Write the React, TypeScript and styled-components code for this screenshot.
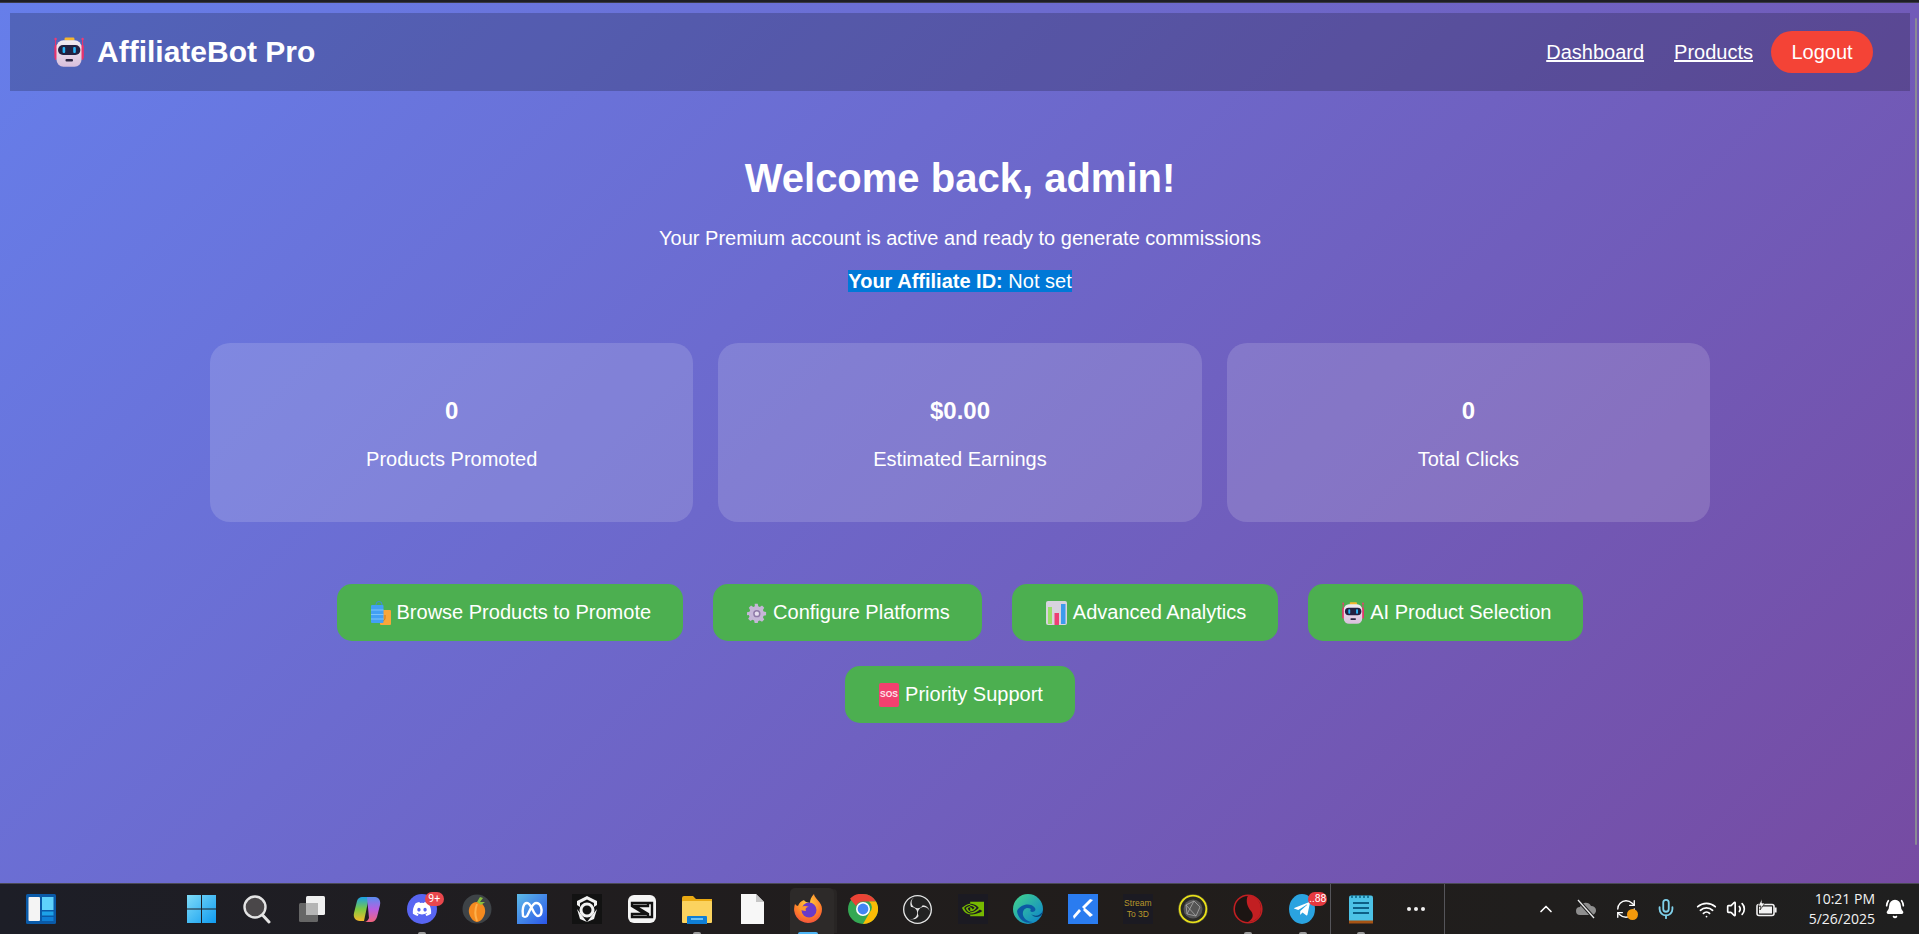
import React from "react";
import styled, { createGlobalStyle } from "styled-components";
import { ChevronUp, Mic, Wifi, Volume2, BellRing, RefreshCw } from "lucide-react";
import { FaDiscord, FaTelegramPlane } from "react-icons/fa";
import { SiObsstudio, SiNvidia } from "react-icons/si";

const Global = createGlobalStyle`
  html, body { margin: 0; padding: 0; height: 100%; overflow: hidden; }
  body { font-family: "Liberation Sans", Arial, sans-serif; color: #fff; }
  #root { height: 100%; }
`;

const Screen = styled.div`
  height: 934px; display: flex; flex-direction: column; position: relative; overflow: hidden;
`;
const TopEdge = styled.div`
  height: 3px; flex: none; background: #1e1e24; border-bottom: 1px solid #3a3a48; box-sizing: border-box;
`;
const Page = styled.main`
  flex: 1; min-height: 0; padding: 10px 9px 0 10px;
  background: linear-gradient(135deg, #667eea 0%, #764ba2 100%);
  box-sizing: border-box; position: relative;
`;
const ScrollThumb = styled.div`
  position: absolute; right: 2px; top: 15px; width: 2px; height: 827px; background: #8a8a94; border-radius: 1px;
`;
const Header = styled.header`
  height: 78px; padding: 0 37px 0 44px; box-sizing: border-box; display: flex; align-items: center;
  justify-content: space-between; background: rgba(0, 0, 0, 0.2);
`;
const Brand = styled.div`
  display: flex; align-items: center; gap: 13px; font-size: 30px; font-weight: 700;
`;
const Nav = styled.nav`
  display: flex; align-items: center;
`;
const NavLink = styled.a`
  color: #fff; font-size: 20px; text-decoration: underline; margin-right: ${(p: { $gap: number }) => p.$gap}px;
`;
const Logout = styled.button`
  width: 102px; height: 42px; border: 0; border-radius: 21px; background: #f44336; color: #fff;
  font: 20px "Liberation Sans", Arial, sans-serif; padding: 0;
`;
const Content = styled.div`
  width: 1500px; margin: 0 auto; text-align: center;
`;
const Title = styled.h1`
  font-size: 40px; line-height: 46px; font-weight: 700; margin: 64px 0 0;
`;
const Sub = styled.p`
  font-size: 20px; line-height: 23px; margin: 26px 0 0; color: #fff;
`;
const IdLine = styled.p`
  font-size: 20px; line-height: 22px; margin: 20px 0 0;
`;
const Selected = styled.span`
  background: #0078d7; color: #fff; display: inline-block; height: 22px;
`;
const Stats = styled.section`
  display: grid; grid-template-columns: repeat(3, 1fr); gap: 25px; margin-top: 51px;
`;
const Stat = styled.div`
  height: 179px; border-radius: 20px; background: rgba(255, 255, 255, 0.15);
  display: flex; flex-direction: column; align-items: center; padding-top: 56px; box-sizing: border-box;
`;
const StatValue = styled.div`
  font-size: 24px; line-height: 24px; font-weight: 700;
`;
const StatLabel = styled.div`
  font-size: 20px; line-height: 24px; margin-top: 24px;
`;
const Actions = styled.section`
  display: flex; flex-wrap: wrap; justify-content: center; gap: 25px 30px; margin-top: 62px; padding: 0 100px;
`;
const Action = styled.button`
  height: 57px; padding: 0 32px 0 34px; border: 0; border-radius: 15px; background: #4caf50; color: #fff;
  font: 20px "Liberation Sans", Arial, sans-serif; display: inline-flex; align-items: center; gap: 6px;
`;
const Taskbar = styled.footer`
  height: 51px; flex: none; box-sizing: border-box; border-top: 1px solid #4a4a55;
  background: linear-gradient(90deg, #1d1e27 0%, #201d1f 30%, #211d1b 60%, #1f1f1f 100%);
  display: flex; align-items: center; position: relative;
`;
const Widgets = styled.div`
  width: 30px; height: 30px; margin-left: 26px; margin-right: 118.5px; display: flex;
`;
const Slot = styled.div<{ $active?: boolean }>`
  width: 55.05px; height: 50px; flex: none; display: flex; align-items: center; justify-content: center; position: relative;
  ${(p) => p.$active && `
    &::before { content: ""; position: absolute; left: 10px; top: 4px; bottom: 0; width: 44px;
      border-radius: 5px 5px 0 0; background: #2d2a29; box-shadow: 4px 0 0 -1px #282524; }
  `}
  & > svg, & > span { position: relative; }
`;
const Running = styled.i<{ $blue?: boolean }>`
  position: absolute; bottom: 0; left: 50%; transform: translateX(-50%); height: 2px;
  width: ${(p) => (p.$blue ? 20 : 8)}px; background: ${(p) => (p.$blue ? "#4db5f5" : "#9a9a9a")}; border-radius: 2px 2px 0 0;
`;
const Badge = styled.b<{ $wide?: boolean }>`
  position: absolute; top: 8px; right: ${(p) => (p.$wide ? 3 : 6)}px; min-width: 17px; height: 14px; padding: 0 1px;
  border-radius: 7px; background: ${(p) => (p.$wide ? "#e6393f" : "#e8474d")}; color: #fff;
  font: 400 10.5px/14px "Roboto", sans-serif; text-align: center;
`;
const Divider = styled.div`
  width: 1px; height: 50px; background: #55555a; flex: none;
`;
const Tray = styled.div`
  display: flex; align-items: center; position: absolute; left: 1531px; top: 0; height: 50px;
`;
const TrayItem = styled.div<{ $w: number }>`
  width: ${(p) => p.$w}px; display: flex; justify-content: center; align-items: center; color: #fff;
`;
const Clock = styled.div`
  width: 82px; margin-left: 10px; text-align: right; font: 14px/20px "Open Sans", sans-serif; color: #f2f2f2;
`;
const Round = styled.span<{ $bg: string }>`
  width: 30px; height: 30px; border-radius: 50%; background: ${(p) => p.$bg}; display: flex; align-items: center; justify-content: center;
`;
const StreamTile = styled.span`
  width: 30px; height: 30px; background: #1b1a22; color: #b8982a; font: 8.5px/11px "Liberation Sans", sans-serif;
  display: flex; align-items: center; justify-content: center; text-align: center;
`;

const Robot = ({ size = 30 }: { size?: number }) => (
  <svg width={size} height={size} viewBox="0 0 30 30" style={{ flex: "none" }}>
    <defs><linearGradient id="rb" x1="0" y1="0" x2="0" y2="1"><stop offset="0" stopColor="#f1ecf2" /><stop offset="1" stopColor="#d9bfdc" /></linearGradient></defs>
    <rect x="10.5" y="0.5" width="10" height="3.2" rx="1.4" fill="#f5b52e" />
    <path d="M1.6 2v21M28.6 2v21" stroke="#e8336d" strokeWidth="1.1" />
    <circle cx="1.6" cy="2" r="1.2" fill="#f03a73" /><circle cx="28.6" cy="2" r="1.2" fill="#f03a73" />
    <rect x="0.4" y="8" width="3" height="14" rx="1.4" fill="#e8336d" /><rect x="26.8" y="8" width="3" height="14" rx="1.4" fill="#e8336d" />
    <rect x="2.5" y="3.2" width="25" height="26.5" rx="7" fill="url(#rb)" />
    <rect x="4" y="8" width="22.4" height="10" rx="5" fill="#222040" />
    <rect x="8.6" y="10" width="2.6" height="6" rx="1" fill="#29b6f6" /><rect x="19.2" y="10" width="2.6" height="6" rx="1" fill="#29b6f6" />
    <rect x="11.5" y="22" width="7.5" height="2.4" rx="1" fill="#2b2540" />
  </svg>
);
const Bags = () => (
  <svg width="20" height="24" viewBox="0 0 20 24" style={{ flex: "none" }}>
    <rect x="9" y="9" width="11" height="15" rx="1" fill="#f9a63a" />
    <path d="M14 14v3c0 2-1.5 3-3 3" stroke="#c9761c" fill="none" strokeWidth="1" />
    <path d="M5 4.5v-1a3 3 0 0 1 6 0v1" stroke="#3a8fe0" fill="none" strokeWidth="1" />
    <rect x="0" y="4" width="12.5" height="18" rx="1" fill="#42a0f5" />
    <path d="M0 9h12.5M0 13.5h12.5M0 18h12.5" stroke="#7cc4fa" strokeWidth="1.2" />
  </svg>
);
const Gear = () => (
  <svg width="20" height="24" viewBox="0 0 24 24" style={{ flex: "none" }}>
    <path fill="#c6b6d8" d="M10 1h4l.7 3.2 2 .9L19.6 3.4l2.9 2.9-1.7 2.9.9 2 3.2.7v4l-3.2.7-.9 2 1.7 2.9-2.9 2.9-2.9-1.7-2 .9L14 26h-4l-.7-3.2-2-.9-2.9 1.7-2.9-2.9 1.7-2.9-.9-2L0 16v-4l3.2-.7.9-2L2.4 6.3l2.9-2.9 2.9 1.7 2-.9z" transform="scale(.92)" />
    <circle cx="11.8" cy="12.8" r="4.4" fill="#8f7aa8" /><circle cx="11.8" cy="12.8" r="2.6" fill="#e6deee" />
  </svg>
);
const Chart = () => (
  <svg width="21" height="24" viewBox="0 0 21 24" style={{ flex: "none" }}>
    <rect width="21" height="24" rx="2" fill="#d8d3de" />
    <rect x="2" y="6" width="4" height="17" fill="#9bdf6a" />
    <rect x="8.5" y="12" width="4.5" height="12" fill="#ee3f74" />
    <rect x="15" y="3" width="4.5" height="20" fill="#3d9bec" />
  </svg>
);
const Sos = () => (
  <span style={{ width: 20, height: 24, flex: "none", background: "#f2416f", borderRadius: 2, fontSize: 8.5, fontWeight: 700, lineHeight: "22px", textAlign: "center", color: "#ffe5ec" }}>SOS</span>
);

const I = (p: { children: React.ReactNode; vb?: string }) => (
  <svg width="30" height="30" viewBox={p.vb ?? "0 0 30 30"}>{p.children}</svg>
);

const taskIcons: { key: string; node: React.ReactNode; run?: boolean; blue?: boolean; active?: boolean; badge?: string; wide?: boolean }[] = [
  { key: "start", node: <I><defs><linearGradient id="st" x1="0" y1="0" x2="1" y2="1"><stop offset="0" stopColor="#7fdcf8" /><stop offset="1" stopColor="#0f9bf0" /></linearGradient></defs><path fill="url(#st)" d="M0 1h14v13.5H0zM15 1h14v13.5H15zM0 15.5h14V29H0zM15 15.5h14V29H15z" /></I> },
  { key: "search", node: <I><circle cx="13" cy="13" r="10.5" fill="#4a4749" stroke="#e4e4e4" strokeWidth="2.4" /><path d="M20.5 21l6.5 7" stroke="#e4e4e4" strokeWidth="3" strokeLinecap="round" /></I> },
  { key: "view", node: <I><rect x="9" y="2" width="19" height="19" rx="1.5" fill="#f0f0f0" /><rect x="2" y="9" width="19" height="19" rx="1.5" fill="#6a6a6a" opacity=".95" /><rect x="9" y="9" width="12" height="12" fill="#b5b5b5" /></I> },
  { key: "copilot", node: <I><defs><linearGradient id="cpa" x1="0" y1="0" x2="0" y2="1"><stop offset="0" stopColor="#1aa0e8" /><stop offset=".5" stopColor="#7ac943" /><stop offset="1" stopColor="#f6b92a" /></linearGradient><linearGradient id="cpb" x1="0" y1="0" x2="0" y2="1"><stop offset="0" stopColor="#5a8df0" /><stop offset=".5" stopColor="#b85fe0" /><stop offset="1" stopColor="#f2647c" /></linearGradient></defs><path fill="url(#cpa)" d="M10 3h7l-5 24H8c-5 0-7-4-6-8l3-12c1-3 3-4 5-4z" /><path fill="url(#cpb)" d="M15 3h8c4 0 6 4 5 8l-3 12c-1 3-3 5-6 5h-7c3 0 4-2 5-4z" /></I> },
  { key: "discord", node: <Round $bg="#5865f2"><FaDiscord size={20} color="#fff" /></Round>, run: true, badge: "9+" },
  { key: "fl", node: <I><circle cx="15" cy="15" r="14.5" fill="#3e4347" /><path d="M15 8c6 0 9 6 8 11s-5 9-8 9-7-4-8-9 2-11 8-11z" fill="#f58a1f" /><path d="M15 10c-2 5-2 12 0 17" stroke="#ffb04a" strokeWidth="2" fill="none" /><path d="M15 8l3-5 3 1-3 4 5 0-4 3z" fill="#8bbf3f" /></I> },
  { key: "meta", node: <I><defs><linearGradient id="mt" x1="0" y1="0" x2="1" y2="1"><stop offset="0" stopColor="#5dbbe8" /><stop offset="1" stopColor="#2a55e8" /></linearGradient></defs><rect width="30" height="30" fill="url(#mt)" /><path d="M6 22c-1-6 0-13 4-13 5 0 6 13 11 13 4 0 4-6 3-9-1-3-3-4-5-4-4 0-6 8-9 13-1 1-3 1-4 0z" fill="none" stroke="#fff" strokeWidth="2.4" /></I> },
  { key: "bit", node: <I><rect width="30" height="30" fill="#121212" /><path d="M15 2l10 5v4l-3 2v-4l-7-3.5L8 9v4l-3-2V7z" fill="#f2f2f2" /><circle cx="15" cy="16" r="6" fill="none" stroke="#f2f2f2" strokeWidth="3" /><path d="M5 15l10 13 10-13-3 10-7 3-7-3z" fill="#f2f2f2" /></I> },
  { key: "capcut", node: <I><rect x="1" y="1" width="28" height="28" rx="6" fill="#f5f5f5" /><path d="M5 9h16v3H8l13 8v3H5v-3h13L5 12z M21 9l4 0v14h-4" fill="none" stroke="#111" strokeWidth="2.4" /></I> },
  { key: "explorer", node: <I><path d="M0 4a2 2 0 0 1 2-2h9l3 3h16v5H0z" fill="#e9a913" /><rect y="7" width="30" height="22" rx="1" fill="#fbd35f" /><rect x="5" y="22" width="20" height="9" rx="1" fill="#0f7fd6" /><rect x="9" y="24" width="12" height="2" fill="#6fc3f5" /></I>, run: true },
  { key: "file", node: <I><path d="M4 0h15l8 8v22H4z" fill="#f7f7f7" /><path d="M19 0l8 8h-8z" fill="#c6c6c6" /></I> },
  { key: "firefox", active: true, run: true, blue: true, node: <I><defs><radialGradient id="ff" cx=".5" cy=".3" r=".9"><stop offset="0" stopColor="#ffd23a" /><stop offset=".55" stopColor="#ff7a2a" /><stop offset="1" stopColor="#e8304e" /></radialGradient></defs><path d="M15 29A14 14 0 0 1 2 10c1 1 2 2 3 2 1-3 3-5 6-6 1 2 3 2 6 3 0-3 1-6 4-9 0 4 8 8 8 15 0 8-6 14-14 14z" fill="url(#ff)" /><circle cx="16" cy="16" r="7.5" fill="#6a3ac8" /><path d="M6 14c3-2 6-3 10-1-3 0-4 2-3 4-3 0-6-1-7-3z" fill="#ff9a2e" /></I> },
  { key: "chrome", node: <I><circle cx="15" cy="15" r="15" fill="#34a853" /><path d="M15 0a15 15 0 0 1 13 7.5H15a7.5 7.5 0 0 0-7 4.6L2 4.8A15 15 0 0 1 15 0z" fill="#ea4335" /><path d="M28 7.5A15 15 0 0 1 15 30l6.5-11.2A7.5 7.5 0 0 0 21 7.5z" fill="#fbbc05" /><circle cx="15" cy="15" r="7" fill="#fff" /><circle cx="15" cy="15" r="5.4" fill="#4285f4" /></I> },
  { key: "obs", node: <Round $bg="#222"><SiObsstudio size={29} color="#e4e4e4" /></Round> },
  { key: "nvidia", node: <StreamTile><SiNvidia size={22} color="#76b900" /></StreamTile> },
  { key: "edge", node: <I><defs><linearGradient id="ed" x1="0" y1="0" x2="1" y2="1"><stop offset="0" stopColor="#43d68a" /><stop offset="1" stopColor="#0a7fd0" /></linearGradient></defs><circle cx="15" cy="15" r="15" fill="url(#ed)" /><path d="M4 17c3-7 14-9 18-3 1 2 0 4-3 4-2 0-2-2-1-3-5-3-9 1-8 6 1 4 5 7 10 7-8 3-15-3-16-11z" fill="#0c59a4" /><path d="M30 17c-3 5-8 6-12 3 2 2 3 3 6 3s6-3 6-6z" fill="#07457f" /></I> },
  { key: "dev", node: <I><rect width="30" height="30" fill="#2a7cf0" /><path d="M6 25l7-8-2-2-6 7zM16 15l9-9-3-1-8 8zM15 16l7 7 3-2-8-7z" fill="#fff" /></I> },
  { key: "stream", node: <StreamTile>Stream<br />To 3D</StreamTile> },
  { key: "globe", node: <I><circle cx="15" cy="15" r="13.5" fill="#2a2a28" stroke="#e8e01a" strokeWidth="2.2" /><circle cx="15" cy="15" r="9.5" fill="#555" /><path d="M8 11l8-4 6 6-4 9-9-2zM8 11l10 11M16 7l-7 13" stroke="#aaa" strokeWidth=".8" fill="none" /><circle cx="15" cy="15" r="14.8" fill="none" stroke="#333" strokeWidth=".6" /></I> },
  { key: "red", run: true, node: <I><circle cx="15" cy="15" r="13.8" fill="#1c1513" stroke="#c21f22" strokeWidth="1.6" /><path d="M15 1.5c8 0 13 6 13 13.5s-5 13-13 13c5-3 6-7 3-11-3-3-6-10-3-15.5z" fill="#c21f22" /></I> },
  { key: "telegram", run: true, badge: "..88", wide: true, node: <Round $bg="#2aa3e0" style={{ marginLeft: -2, width: 26 }}><FaTelegramPlane size={18} color="#fff" /></Round> },
];

const Tile = () => (
  <svg width="30" height="30" viewBox="0 0 30 30">
    <rect width="30" height="30" rx="1.5" fill="#0a5aa8" />
    <rect x="2.5" y="3" width="11.5" height="24" rx="1" fill="#f4f4f4" />
    <rect x="16" y="3" width="11.5" height="13" fill="#5fd2fb" />
    <rect x="16" y="17.5" width="11.5" height="4" fill="#1da2e8" />
    <rect x="16" y="23" width="11.5" height="4" fill="#0f7fd6" />
  </svg>
);

const Notepad = () => (
  <svg width="24" height="30" viewBox="0 0 24 30">
    <rect y="1.5" width="24" height="27" rx="2" fill="#4cc2e6" />
    <rect y="26.5" width="24" height="3" fill="#a65314" />
    <path d="M3 1v3M7 1v3M11 1v3M15 1v3M19 1v3" stroke="#0f6a8c" strokeWidth="1.6" />
    <path d="M4 9h16M4 14h16M4 19h16" stroke="#0d5f86" strokeWidth="2" />
  </svg>
);

const Dots = () => (
  <svg width="20" height="6" viewBox="0 0 20 6"><circle cx="3" cy="3" r="2" fill="#f0f0f0" /><circle cx="10" cy="3" r="2" fill="#f0f0f0" /><circle cx="17" cy="3" r="2" fill="#f0f0f0" /></svg>
);

const CloudOff = () => (
  <svg width="22" height="20" viewBox="0 0 22 20"><path d="M5 16a4 4 0 0 1 0-8 6 6 0 0 1 11-1 4.5 4.5 0 0 1 1 9z" fill="#8e8e8e" /><path d="M3 1l16 18" stroke="#1f1f1f" strokeWidth="3.4" /><path d="M3 1l16 18" stroke="#ececec" strokeWidth="1.3" /></svg>
);
const Battery = () => (
  <svg width="22" height="20" viewBox="0 0 22 20"><rect x="1" y="5.5" width="17" height="11" rx="2" fill="none" stroke="#f2f2f2" strokeWidth="1.6" /><rect x="3" y="7.5" width="13" height="7" fill="#f2f2f2" /><rect x="18.6" y="8.5" width="2" height="5" fill="#f2f2f2" /><path d="M6 0L2 7h3l-1 4 5-7H6z" fill="#f2f2f2" stroke="#201d1b" strokeWidth=".7" /></svg>
);

export default function App() {
  return (
    <Screen>
      <Global />
      <TopEdge />
      <Page>
        <ScrollThumb />
        <Header>
          <Brand><Robot />AffiliateBot Pro</Brand>
          <Nav>
            <NavLink href="#" $gap={30}>Dashboard</NavLink>
            <NavLink href="#" $gap={18}>Products</NavLink>
            <Logout>Logout</Logout>
          </Nav>
        </Header>
        <Content>
          <Title>Welcome back, admin!</Title>
          <Sub>Your Premium account is active and ready to generate commissions</Sub>
          <IdLine><Selected><strong>Your Affiliate ID:</strong> Not set</Selected></IdLine>
          <Stats>
            <Stat><StatValue>0</StatValue><StatLabel>Products Promoted</StatLabel></Stat>
            <Stat><StatValue>$0.00</StatValue><StatLabel>Estimated Earnings</StatLabel></Stat>
            <Stat><StatValue>0</StatValue><StatLabel>Total Clicks</StatLabel></Stat>
          </Stats>
          <Actions>
            <Action><Bags />Browse Products to Promote</Action>
            <Action><Gear />Configure Platforms</Action>
            <Action><Chart />Advanced Analytics</Action>
            <Action><Robot size={22} />AI Product Selection</Action>
            <Action><Sos />Priority Support</Action>
          </Actions>
        </Content>
      </Page>
      <Taskbar>
        <Widgets><Tile /></Widgets>
        {taskIcons.map((t) => (
          <Slot key={t.key} $active={t.active}>
            {t.node}
            {t.badge && <Badge $wide={t.wide}>{t.badge}</Badge>}
            {t.run && <Running $blue={t.blue} />}
          </Slot>
        ))}
        <Divider />
        <Slot style={{ marginLeft: 2 }}><Notepad /><Running /></Slot>
        <Slot><Dots /></Slot>
        <Divider />
        <Tray>
          <TrayItem $w={30}><ChevronUp size={20} /></TrayItem>
          <TrayItem $w={50}><CloudOff /></TrayItem>
          <TrayItem $w={30}>
            <span style={{ position: "relative", display: "flex" }}>
              <RefreshCw size={22} strokeWidth={1.5} />
              <span style={{ position: "absolute", right: -1, bottom: 0, width: 11, height: 11, borderRadius: "50%", background: "#f59a0c" }} />
            </span>
          </TrayItem>
          <TrayItem $w={50}><Mic size={22} color="#7fd0ea" /></TrayItem>
          <TrayItem $w={30}><Wifi size={21} /></TrayItem>
          <TrayItem $w={30}><Volume2 size={20} /></TrayItem>
          <TrayItem $w={32}><Battery /></TrayItem>
          <Clock>10:21 PM<br />5/26/2025</Clock>
          <TrayItem $w={40}><BellRing size={20} fill="#fff" /></TrayItem>
        </Tray>
      </Taskbar>
    </Screen>
  );
}
